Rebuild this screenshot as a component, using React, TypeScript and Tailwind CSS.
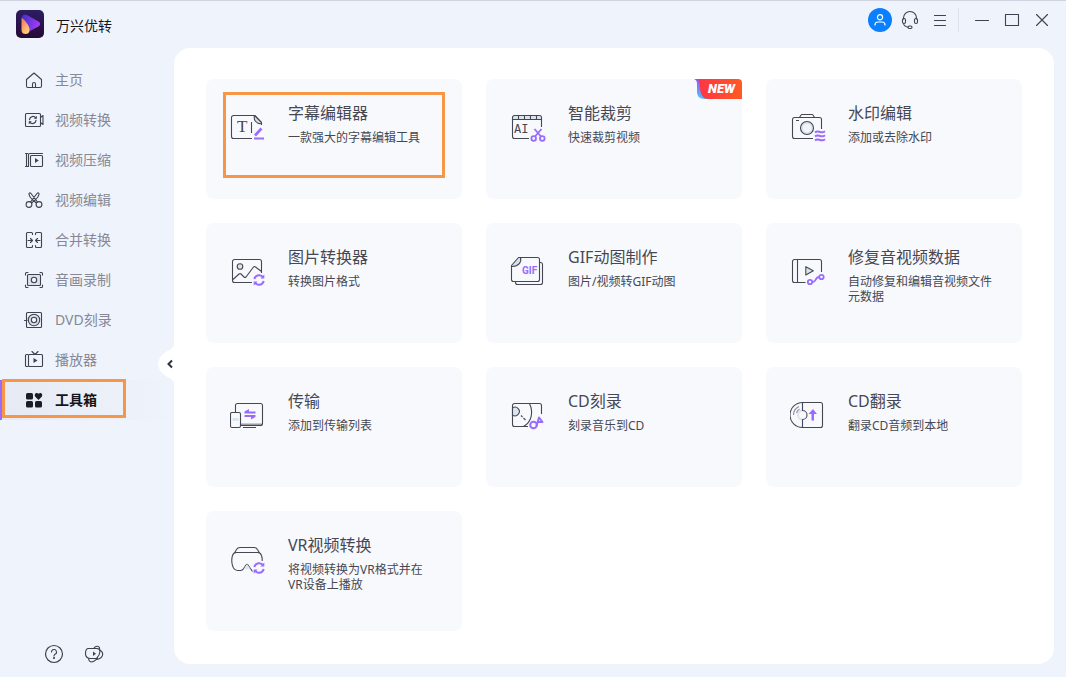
import type { ReactNode } from "react";

type IconProps = {
    children: ReactNode;
};

type NavItem = {
    label: string;
    icon: ReactNode;
    active?: boolean;
}

type Tool = {
    title: string;
    desc: string;
    icon: ReactNode;
    isNew?: boolean;
    marked?: boolean;
}

const NavIcon = ({ children }: IconProps) => (
    <svg className="h-5 w-5 shrink-0" viewBox="0 0 20 20" fill="none" stroke="#3f424f" strokeWidth="1.1" strokeLinecap="round" strokeLinejoin="round" aria-hidden="true">
        {children}
    </svg>
);

const ToolIcon = ({ children }: IconProps) => (
    <svg className="mt-2 h-9 w-9 shrink-0" viewBox="0 0 36 36" fill="none" stroke="#454853" strokeWidth="1.1" strokeLinejoin="round" aria-hidden="true">
        {children}
    </svg>
);

const RefreshMark = () => (
    <g stroke="#9a6bff" strokeWidth="2">
        <path d="M24.3 26a5 5 0 0 1 9-1.6M33.7 28a5 5 0 0 1-9 1.6" />
        <path d="M34.3 21.5v4h-4zM23.7 32.5v-4h4z" fill="#9a6bff" stroke="none" />
    </g>
);

const navItems: NavItem[] = [
    {
        label: "主页",
        icon: <NavIcon><path d="M2.5 9.5 10 3l7.5 6.5V16a1.5 1.5 0 0 1-1.5 1.500H4A1.500 1.500 0 0 1 2.500 16zM8.500 17.500V14a1.500 1.500 0 0 1 3 0v3.500" /></NavIcon>,
    },
    {
        label: "视频转换",
        icon: (
            <NavIcon>
                <rect x="1.5" y="3.5" width="15" height="13" rx="1" />
                <path d="M16.5 7.5 19 5.500v9l-2.500-2" />
                <path d="M5.500 9.500a3.500 3.500 0 0 1 6.300-1.600M12 10.500a3.500 3.500 0 0 1-6.300 1.600" strokeWidth="1.3" />
                <path d="M12.800 5.700v3h-3zM4.800 14.300v-3h3z" fill="#3f424f" stroke="none" />
            </NavIcon>
        ),
    },
    {
        label: "视频压缩",
        icon: (
            <NavIcon>
                <rect x="6.5" y="5.5" width="12" height="11" rx="1" />
                <path d="M18.500 3.500h-13a1 1 0 0 0-1 1v12M2.500 3.500v13M1.500 3.500h2M1.500 16.500h3" />
                <path d="M11 8v5l3.800-2.500z" fill="#3f424f" stroke="none" />
            </NavIcon>
        ),
    },
    {
        label: "视频编辑",
        icon: (
            <NavIcon>
                <circle cx="5" cy="14.5" r="2.9" />
                <circle cx="15" cy="14.5" r="2.9" />
                <path d="M6.500 12 13 3.500c1-1.200 2.300-.5 2 .8-.4 2.200-1.800 4-3.400 5.400L7.500 13M13.500 12 7 3.500c-1-1.200-2.300-.5-2 .8.4 2.200 1.800 4 3.400 5.400l4.100 3.300" />
            </NavIcon>
        ),
    },
    {
        label: "合并转换",
        icon: (
            <NavIcon>
                <path d="M8.500 4.500v-1a1 1 0 0 0-1-1h-4a1 1 0 0 0-1 1v13a1 1 0 0 0 1 1h4a1 1 0 0 0 1-1v-1M11.500 4.500v-1a1 1 0 0 1 1-1h4a1 1 0 0 1 1 1v13a1 1 0 0 1-1 1h-4a1 1 0 0 1-1-1v-1" />
                <path d="M4 10.500h4.500M6.500 8.500l2 2-2 2M16 10.500h-4.500M13.500 8.500l-2 2 2 2" />
            </NavIcon>
        ),
    },
    {
        label: "音画录制",
        icon: (
            <NavIcon>
                <path d="M1.500 5V3.500a1 1 0 0 1 1-1H4M16 2.500h1.500a1 1 0 0 1 1 1V5M18.500 15v1.500a1 1 0 0 1-1 1H16M4 17.500H2.500a1 1 0 0 1-1-1V15" />
                <rect x="3.500" y="4.500" width="13" height="11" rx="1" fill="#dbe1ef" />
                <circle cx="10" cy="10" r="2.700" fill="#eff3fb" />
            </NavIcon>
        ),
    },
    {
        label: "DVD刻录",
        icon: (
            <NavIcon>
                <rect x="2.500" y="2.500" width="15" height="15" rx="1" />
                <circle cx="10" cy="10" r="5.700" fill="#dbe1ef" />
                <circle cx="10" cy="10" r="2.700" fill="#eff3fb" />
                <path d="M.5 10.500h2.500" />
            </NavIcon>
        ),
    },
    {
        label: "播放器",
        icon: (
            <NavIcon>
                <path d="M4 4.500H2.500a1 1 0 0 0-1 1v10a1 1 0 0 0 1 1H4" />
                <rect x="4.500" y="4.500" width="14" height="12" rx="1" />
                <path d="M8 1.500l3 3 3-3" />
                <path d="M9.500 8v5l4-2.500z" fill="#3f424f" stroke="none" />
            </NavIcon>
        ),
    },
    {
        label: "工具箱",
        active: true,
        icon: (
            <NavIcon>
                <g fill="#1b1c24" stroke="none">
                    <rect x="2" y="3" width="7" height="6.500" rx="1.500" />
                    <rect x="2" y="11" width="7" height="6.500" rx="1.500" />
                    <rect x="11" y="11" width="7" height="6.500" rx="1.500" />
                    <path d="M14.500 9.900 11.300 6.800C9.700 4.700 12 1.600 14.500 3.700c2.500-2.100 4.800 1 3.200 3.100z" />
                </g>
            </NavIcon>
        ),
    },
];

const tools: Tool[] = [
    {
        title: "字幕编辑器",
        desc: "一款强大的字幕编辑工具",
        marked: true,
        icon: (
            <ToolIcon>
                <path d="M22 29.500H3.500a2 2 0 0 1-2-2v-19a2 2 0 0 1 2-2H25l6.500 7V16" />
                <path d="M24.500 6.500c-1.200 4 1.500 8.500 7 8.200v-1.200z" fill="#d9e1ea" />
                <text x="7" y="23" fontFamily="Liberation Serif, serif" fontSize="17" fill="#454853" stroke="none">T</text>
                <path d="M21.500 13v11" />
                <path d="M25 26.500 31.500 19.500" stroke="#9a6bff" strokeWidth="2.600" />
                <path d="M24 29.500h10" stroke="#9a6bff" strokeWidth="2" />
            </ToolIcon>
        ),
    },
    {
        title: "智能裁剪",
        desc: "快速裁剪视频",
        isNew: true,
        icon: (
            <ToolIcon>
                <path d="M2.500 10.500v-2a2 2 0 0 1 2-2h25a2 2 0 0 1 2 2v2z" fill="#dbe4ef" />
                <path d="M2.500 10v17.500a2 2 0 0 0 2 2H19M31.500 10v8M8.500 6.500v4M14.500 6.500v4M20.500 6.500v4M26.500 6.500v4" />
                <text x="4" y="24" fontFamily="DejaVu Sans Mono, monospace" fontSize="12" fill="#454853" stroke="none">AI</text>
                <g stroke="#9a6bff" strokeWidth="1.800">
                    <circle cx="23.700" cy="29.500" r="2.300" />
                    <circle cx="32.300" cy="29.500" r="2.300" />
                    <path d="M25 27.500 31.500 20M31 27.500 24.500 20" />
                </g>
            </ToolIcon>
        ),
    },
    {
        title: "水印编辑",
        desc: "添加或去除水印",
        icon: (
            <ToolIcon>
                <path d="M23 29.500H4.500a2 2 0 0 1-2-2v-17a2 2 0 0 1 2-2h25a2 2 0 0 1 2 2V20M9.500 8.500l1.500-2.500a1 1 0 0 1 1-.5h10a1 1 0 0 1 1 .5l1.500 2.500M6 11.500h3" />
                <circle cx="17" cy="19" r="6.500" fill="#dbe4ef" />
                <circle cx="17" cy="19" r="4.200" fill="#f1f4f9" stroke="none" />
                <path d="M25 23.500c2-2 3.500-1 5-.5s3 1 5-.8M25 27.500c2-2 3.500-1 5-.5s3 1 5-.8M25 31.500c2-2 3.500-1 5-.5s3 1 5-.8" stroke="#9a6bff" strokeWidth="2" />
            </ToolIcon>
        ),
    },
    {
        title: "图片转换器",
        desc: "转换图片格式",
        icon: (
            <ToolIcon>
                <path d="M22 29.500H4.500a2 2 0 0 1-2-2v-19a2 2 0 0 1 2-2h25a2 2 0 0 1 2 2V20" />
                <path d="M3 26.500l6-5.500q1-.8 2 0l3 3q1 .8 2 0l7.500-10q1-1 2 0l6 4.500" />
                <circle cx="10" cy="13.500" r="2.800" fill="#dbe4ef" />
                <RefreshMark />
            </ToolIcon>
        ),
    },
    {
        title: "GIF动图制作",
        desc: "图片/视频转GIF动图",
        icon: (
            <ToolIcon>
                <path d="M10.500 4.500h17a2 2 0 0 1 2 2v20a2 2 0 0 1-2 2h-24a2 2 0 0 1-2-2V13.500z" />
                <path d="M10.500 4.500c1.200 4-1.500 9.500-9 9v-1l7-8z" fill="#d9e1ea" />
                <path d="M29.500 9.500h1a2 2 0 0 1 2 2v18a2 2 0 0 1-2 2h-23a2 2 0 0 1-2-2v-1" />
                <text x="12" y="21" fontFamily="Roboto, sans-serif" fontSize="10" fontWeight="700" fill="#9a6bff" stroke="none">GIF</text>
            </ToolIcon>
        ),
    },
    {
        title: "修复音视频数据",
        desc: "自动修复和编辑音视频文件元数据",
        icon: (
            <ToolIcon>
                <path d="M15.500 29.500h-11a2 2 0 0 1-2-2v-19a2 2 0 0 1 2-2h25a2 2 0 0 1 2 2V19M7.500 6.500v23" />
                <path d="M15.800 13.700v8.300l7.500-4.200z" fill="#dbe4ef" />
                <g stroke="#9a6bff" strokeWidth="1.800">
                    <circle cx="20" cy="29" r="2.200" />
                    <circle cx="31.500" cy="24" r="2.200" />
                    <path d="M22.200 29c4.500.5 2.500-5 7.100-5" />
                </g>
            </ToolIcon>
        ),
    },
    {
        title: "传输",
        desc: "添加到传输列表",
        icon: (
            <ToolIcon>
                <path d="M11 27.500h21" stroke="#9b9ea6" strokeWidth="2" />
                <path d="M5.500 15.500v-7a2 2 0 0 1 2-2h23a2 2 0 0 1 2 2v18a2 2 0 0 1-2 2h-20M13 30.500h13" />
                <rect x=".5" y="15.500" width="10" height="15" rx="1.500" fill="#f8f9fd" />
                <path d="M2.500 22.500h6" stroke="#dbe4ef" strokeWidth="3" />
                <path d="M14.500 14.500h11v2h-11zM14.500 14.500 19 12v3zM14.500 18h11v2h-11zM25.500 20 21 22.500v-3z" fill="#9a6bff" stroke="none" />
            </ToolIcon>
        ),
    },
    {
        title: "CD刻录",
        desc: "刻录音乐到CD",
        icon: (
            <ToolIcon>
                <path d="M18 29.500H4.500a2 2 0 0 1-2-2v-19a2 2 0 0 1 2-2h25a2 2 0 0 1 2 2v8.500" />
                <path d="M19.500 6.500c4 8.500 2.500 18-6 23M11 18.500l1.500 1.500M13.500 21l2 2" />
                <path d="M2.500 11a4.300 4.300 0 1 1 0 7z" fill="#dbe4ef" />
                <circle cx="23.500" cy="28" r="3.300" stroke="#9a6bff" strokeWidth="2" />
                <path d="M26.500 29 29 20.500l3.500 4.500H28" stroke="#9a6bff" strokeWidth="2" />
            </ToolIcon>
        ),
    },
    {
        title: "CD翻录",
        desc: "翻录CD音频到本地",
        icon: (
            <ToolIcon>
                <path d="M12.500 5.500h18a2 2 0 0 1 2 2v21a2 2 0 0 1-2 2h-18a12.500 12.500 0 0 1 0-25z" />
                <path d="M12.500 13.500a4.500 4.500 0 0 0 0 9" stroke="#dbe4ef" strokeWidth="2" />
                <path d="M12.500 5.500v8a4.500 4.500 0 0 1 0 9v8" />
                <path d="M3.500 18q0-6 5.500-8.500M6.500 16q.8-2.700 3-4" stroke="#8f929b" />
                <path d="M23 12l4 5h-3v6.500h-2.500V17h-3z" fill="#9a6bff" stroke="none" />
            </ToolIcon>
        ),
    },
    {
        title: "VR视频转换",
        desc: "将视频转换为VR格式并在VR设备上播放",
        icon: (
            <ToolIcon>
                <path d="M22.500 30.500 18 24q-1-1.400-2 0l-2.500 3.800q-1 1.700-3 1.700H7.500q-2.500 0-4-2.500l-1-2.500q-1.500-5 0-10 .8-3 4-3h21q3.200 0 4 3 .9 3 .7 5.500" />
                <path d="M4.500 12l2-3.500q1-2 3.500-2h14q2.500 0 3.500 2l2 3.500" />
                <path d="M13.500 28.500 17 23l3.500 5" fill="#dbe4ef" stroke="none" />
                <RefreshMark />
            </ToolIcon>
        ),
    },
];

const Logo = () => (
    <svg className="h-7 w-7" viewBox="0 0 28 28" aria-hidden="true">
        <defs>
            <linearGradient id="logoBg" x1="0" y1="0" x2="0" y2="1">
                <stop offset="0" stopColor="#2d1d62" />
                <stop offset="1" stopColor="#260a34" />
            </linearGradient>
            <linearGradient id="logoPlay" x1="0" y1="0" x2="1" y2="0.4">
                <stop offset="0" stopColor="#3a32c8" />
                <stop offset="1" stopColor="#a23bf5" />
            </linearGradient>
            <linearGradient id="logoDrop" x1="0" y1="0" x2="0.6" y2="1">
                <stop offset="0" stopColor="#f0705a" />
                <stop offset="1" stopColor="#ffd07a" />
            </linearGradient>
        </defs>
        <rect width="28" height="28" rx="5" fill="url(#logoBg)" />
        <path d="M6 7.500c0-3 2.500-3.700 5-2.500l11.500 6.500c2.300 1.400 2.300 3.600 0 5L13 21.500z" fill="url(#logoPlay)" />
        <path d="M5.500 7.500c3.500 3 8 8 8 12.500 0 3-2 4-4 4s-4-1-4-4z" fill="url(#logoDrop)" />
    </svg>
);

const Sidebar = () => {
    return (
        <aside className="flex w-[174px] shrink-0 flex-col">
            <div className="flex items-center gap-3 px-4 pt-[9px]">
                <Logo />
                <h1 className="pt-1 text-sm text-[#14151c]">万兴优转</h1>
            </div>
            <nav className="mt-[22px] flex flex-col">
                {navItems.map((item) => (
                    <a
                        key={item.label}
                        href="#"
                        aria-current={item.active ? "page" : undefined}
                        className={
                            item.active
                                ? "relative flex h-10 items-center gap-[11px] border-l-2 border-[#9a6bff] bg-linear-to-r from-[#e6eaf4] to-[#eff3fb] pl-[22px] text-sm font-bold text-[#14151c]"
                                : "flex h-10 items-center gap-[11px] pl-6 text-sm text-[#858896]"
                        }
                    >
                        {item.icon}
                        {item.label}
                        {item.active && <span className="absolute -top-px left-0 h-[39px] w-[124px] border-3 border-[#f79646]" />}
                    </a>
                ))}
            </nav>
            <div className="mt-auto flex gap-5 pb-[13px] pl-11">
                <button type="button" aria-label="帮助">
                    <NavIcon>
                        <circle cx="10" cy="10" r="8.500" strokeWidth="1.200" />
                        <path d="M7.500 8a2.500 2.500 0 1 1 3.500 2.300q-1 .5-1 1.700" />
                        <circle cx="10" cy="14" r=".5" fill="#3f424f" />
                    </NavIcon>
                </button>
                <button type="button" aria-label="视频教程">
                    <NavIcon>
                        <path d="M4 4.500h9q3 .3 3 3-.3 4-3.500 7H6q-4.500-.5-4.500-5 0-4.500 2.500-5z" />
                        <path d="M9.500 4.500q2.500-3 5-2 1.500.7 1.200 3.500 3 1.500 3 4 0 4.500-6.200 5.500M4.500 14.500q.5 3.500 3.500 3.500 2.500-.3 5.500-4" />
                        <path d="M9 7.500v4.500l3-2.200z" fill="#3f424f" stroke="none" />
                    </NavIcon>
                </button>
            </div>
        </aside>
    );
};

const WindowBar = () => {
    const buttonStyle = "flex h-[30px] w-[30px] items-center justify-center";

    return (
        <header className="mb-[9px] flex h-[38px] items-center justify-end pr-[9px]">
            <button type="button" aria-label="账户" className={buttonStyle}>
                <span className="flex h-6 w-6 items-center justify-center rounded-full bg-[#0a80ff]">
                    <svg className="h-3 w-3" viewBox="0 0 12 12" fill="none" stroke="#fff" strokeWidth="1.200" aria-hidden="true">
                        <circle cx="6" cy="3.200" r="2.600" />
                        <path d="M1 11.500V11q0-3 3-3h4q3 0 3 3v.5" />
                    </svg>
                </span>
            </button>
            <button type="button" aria-label="客服" className={buttonStyle}>
                <NavIcon>
                    <path d="M3.500 9V8a6.500 6.500 0 0 1 13 0v1M3.500 13.500q.5 3 4.500 3.700" />
                    <rect x="2.500" y="8.500" width="3" height="5" rx="1.500" />
                    <rect x="14.500" y="8.500" width="3" height="5" rx="1.500" />
                    <rect x="8" y="16" width="4" height="2.500" rx="1.200" />
                </NavIcon>
            </button>
            <button type="button" aria-label="菜单" className={buttonStyle}>
                <NavIcon><path d="M4.500 5.500h11M4.500 10.500h11M4.500 15.500h11" /></NavIcon>
            </button>
            <span className="mr-2 ml-[3px] h-6 w-px bg-[#dde1ea]" />
            <button type="button" aria-label="最小化" className={buttonStyle}>
                <NavIcon><path d="M3.500 10.500h13" /></NavIcon>
            </button>
            <button type="button" aria-label="最大化" className={buttonStyle}>
                <NavIcon><rect x="3.500" y="4.500" width="13" height="11" /></NavIcon>
            </button>
            <button type="button" aria-label="关闭" className={buttonStyle}>
                <NavIcon><path d="M4.500 4.500l11 11M15.500 4.500l-11 11" /></NavIcon>
            </button>
        </header>
    );
};

const NewBadge = () => (
    <span className="absolute top-0 right-0 flex h-5 w-12 items-center justify-end pr-[7px]">
        <svg className="absolute inset-0 h-full w-full" viewBox="0 0 48 20" aria-hidden="true">
            <defs>
                <linearGradient id="badgeRed" x1="0" y1="0" x2="1" y2="0">
                    <stop offset="0" stopColor="#ff3348" />
                    <stop offset="1" stopColor="#ff5a24" />
                </linearGradient>
                <linearGradient id="badgeBlue" x1="0" y1="0" x2="0" y2="1">
                    <stop offset="0" stopColor="#8a5cf5" />
                    <stop offset="1" stopColor="#4cc4ff" />
                </linearGradient>
            </defs>
            <path d="M0 0h8l6 20h-3c-6 0-8-3-8-8V5C3 2 2 1 0 0z" fill="url(#badgeBlue)" />
            <path d="M3 0h41q4 0 4 4v16H14c-5 0-7-4-8-10C5.500 5 6 2 3 0z" fill="url(#badgeRed)" />
        </svg>
        <span className="relative font-[Roboto,sans-serif] text-[13px] leading-5 font-black text-white italic">NEW</span>
    </span>
);

const ToolCard = ({ tool }: { tool: Tool }) => {
    return (
        <button type="button" className="relative flex min-h-[120px] items-start gap-[22px] rounded-lg bg-[#f8f9fd] px-6 pt-[22px] pb-5 text-left">
            {tool.icon}
            <span className="flex flex-col gap-[5px]">
                <span className="text-base leading-6 text-[#454853]">{tool.title}</span>
                <span className="max-w-[148px] text-xs leading-[15px] text-[#454853]">{tool.desc}</span>
            </span>
            {tool.isNew && <NewBadge />}
            {tool.marked && <span className="absolute top-[13px] left-[17px] h-[86px] w-[222px] border-3 border-[#f79646]" />}
        </button>
    );
};

const App = () => {
    return (
        <div className="flex min-h-screen border-t border-[#d0d4e0] bg-[#eff3fb] font-['Noto_Sans','Noto_Sans_CJK_SC',sans-serif]">
            <Sidebar />
            <div className="flex min-w-0 flex-1 flex-col">
                <WindowBar />
                <main className="relative mr-3 mb-[13px] flex-1 rounded-2xl bg-white px-8 pt-[31px] pb-8">
                    <button type="button" aria-label="收起侧栏" className="absolute top-[297px] -left-4 h-[38px] w-4">
                        <svg className="h-full w-full" viewBox="0 0 16 38" aria-hidden="true">
                            <path d="M16 0c0 3-4 4.500-8 7C-2.500 13.500-2.500 24.500 8 31c4 2.500 8 4 8 7z" fill="#fff" />
                            <path d="M14 15.500l-3.500 3.500 3.500 3.500" fill="none" stroke="#2f323d" strokeWidth="2" />
                        </svg>
                    </button>
                    <div className="grid grid-cols-3 gap-6">
                        {tools.map((tool) => (
                            <ToolCard key={tool.title} tool={tool} />
                        ))}
                    </div>
                </main>
            </div>
        </div>
    );
};

export default App;
